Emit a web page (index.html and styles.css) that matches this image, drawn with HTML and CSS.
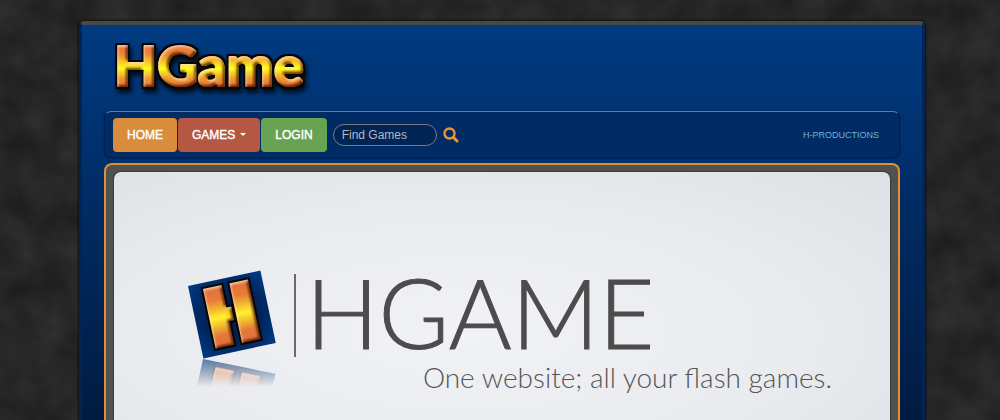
FILE: index.html
```html
<!DOCTYPE html>
<html lang="en">
<head>
<meta charset="utf-8">
<title>HGame</title>
<link rel="stylesheet" href="styles.css">
</head>
<body>
<svg class="texture" aria-hidden="true">
  <filter id="smoke" x="0" y="0" width="100%" height="100%" color-interpolation-filters="sRGB">
    <feTurbulence type="fractalNoise" baseFrequency="0.03" numOctaves="3" seed="4"/>
    <feColorMatrix values="0.1 0 0 0 0.1  0.1 0 0 0 0.1  0.1 0 0 0 0.1  0 0 0 0 1"/>
  </filter>
  <rect width="100%" height="100%" filter="url(#smoke)"/>
</svg>
<div class="page">
  <header class="masthead">
    <a class="brand" href="#" aria-label="HGame">
      <svg class="wordmark" width="208" height="64" viewBox="0 0 208 64">
        <defs>
          <linearGradient id="flame" gradientUnits="userSpaceOnUse" x1="0" y1="7" x2="0" y2="51">
            <stop offset="0" stop-color="#e96f3a"/>
            <stop offset=".25" stop-color="#ee8535"/>
            <stop offset=".58" stop-color="#ffff1c"/>
            <stop offset=".8" stop-color="#f19a31"/>
            <stop offset="1" stop-color="#e5713a"/>
          </linearGradient>
          <filter id="bevel" x="-10%" y="-20%" width="120%" height="150%" color-interpolation-filters="sRGB">
            <feGaussianBlur in="SourceAlpha" stdDeviation="1" result="soft"/>
            <feOffset in="soft" dx="-2" dy="-2" result="up"/>
            <feComposite in="SourceAlpha" in2="up" operator="out" result="low"/>
            <feFlood flood-color="#4a1200" flood-opacity=".8"/>
            <feComposite in2="low" operator="in" result="shade"/>
            <feOffset in="soft" dx="1" dy="2" result="down"/>
            <feComposite in="SourceAlpha" in2="down" operator="out" result="high"/>
            <feFlood flood-color="#ffe8cc" flood-opacity=".7"/>
            <feComposite in2="high" operator="in" result="shine"/>
            <feMorphology in="SourceAlpha" operator="dilate" radius="1.6" result="wide"/>
            <feFlood flood-color="#0b0502"/>
            <feComposite in2="wide" operator="in" result="edge"/>
            <feMerge><feMergeNode in="edge"/><feMergeNode in="SourceGraphic"/><feMergeNode in="shade"/><feMergeNode in="shine"/></feMerge>
          </filter>
        </defs>
        <g class="wordmark-shadow"><text x="4" y="50" filter="url(#bevel)">HGame</text></g>
      </svg>
    </a>
  </header>
  <nav class="navbar">
    <a class="button home" href="#">HOME</a>
    <button class="button games" type="button">GAMES <span class="caret"></span></button>
    <a class="button login" href="#">LOGIN</a>
    <form class="search" role="search">
      <input class="search-box" type="text" placeholder="Find Games" aria-label="Find Games">
      <button class="search-go" type="submit" aria-label="Search">
        <svg width="16" height="16" viewBox="0 0 16 16" fill="none" stroke="#ee9237">
          <circle cx="6.5" cy="6.5" r="5" stroke-width="2.4"/>
          <path d="M10.3 10.3 14 14" stroke-width="3" stroke-linecap="round"/>
        </svg>
      </button>
    </form>
    <a class="credit" href="#">H-PRODUCTIONS</a>
  </nav>
  <main class="frame">
    <section class="hero">
      <svg class="emblem" width="92" height="122" viewBox="0 0 92 122" aria-hidden="true">
        <defs>
          <linearGradient id="bar" x1="0" y1="0" x2="0" y2="1">
            <stop offset="0" stop-color="#e2713a"/>
            <stop offset=".22" stop-color="#e67b38"/>
            <stop offset=".52" stop-color="#fff22c"/>
            <stop offset=".8" stop-color="#e57a38"/>
            <stop offset="1" stop-color="#e06f3b"/>
          </linearGradient>
          <linearGradient id="nub" x1="0" y1="0" x2="0" y2="1">
            <stop offset="0" stop-color="#f5bd30"/>
            <stop offset="1" stop-color="#fff42c"/>
          </linearGradient>
          <radialGradient id="tile" cx=".5" cy=".5" r=".7">
            <stop offset="0" stop-color="#001a45"/>
            <stop offset=".6" stop-color="#00265e"/>
            <stop offset="1" stop-color="#003b86"/>
          </radialGradient>
          <linearGradient id="fade" gradientUnits="userSpaceOnUse" x1="0" y1="88" x2="0" y2="119">
            <stop offset="0" stop-color="#fff" stop-opacity=".7"/>
            <stop offset="1" stop-color="#fff" stop-opacity="0"/>
          </linearGradient>
          <mask id="fade-mask" maskUnits="userSpaceOnUse" x="0" y="86" width="92" height="36">
            <rect y="86" width="92" height="36" fill="url(#fade)"/>
          </mask>
          <g id="badge">
            <rect width="74" height="74" fill="url(#tile)"/>
            <g filter="url(#bevel)">
              <rect x="14" y="6" width="19" height="61" fill="url(#bar)"/>
              <rect x="32" y="29" width="6" height="14" rx="1" fill="url(#nub)"/>
            </g>
            <rect x="41" y="6" width="19" height="61" fill="url(#bar)" filter="url(#bevel)"/>
          </g>
        </defs>
        <use href="#badge" transform="translate(3 18) rotate(-12)"/>
        <g mask="url(#fade-mask)">
          <use href="#badge" transform="matrix(.98 .2 -.2 .9 18 91)"/>
        </g>
      </svg>
      <div class="slogan">
        <h1 class="title">HGAME</h1>
        <p class="tagline">One website; all your flash games.</p>
      </div>
    </section>
  </main>
</div>
</body>
</html>
```

FILE: styles.css
```css
* { box-sizing: border-box; }
html { height: 100%; }
body {
  height: 100%;
  margin: 0;
  padding: 21px 75px 0 79px;
  overflow: hidden;
  background: #252525;
  font-family: "Liberation Sans", Arial, sans-serif;
}
.texture {
  position: absolute;
  inset: 0;
  width: 100%;
  height: 100%;
}
.page {
  position: relative;
  display: flex;
  flex-direction: column;
  height: 100%;
  padding: 0 22px;
  border: solid;
  border-width: 4px 3px 0;
  border-color: #484848 #002453 #002453;
  border-radius: 5px 5px 0 0;
  background: linear-gradient(#003b81, #002f6b 35%, #001b41);
  box-shadow: 0 0 2px 1px #111;
}
.masthead { padding: 11px 6px; }
.brand { display: block; width: 208px; }
.wordmark { display: block; overflow: visible; }
.wordmark text {
  fill: url(#flame);
  stroke: url(#flame);
  stroke-width: 2px;
  stroke-linejoin: round;
  font-family: Lato, sans-serif;
  font-size: 56px;
  font-weight: 900;
}
.wordmark-shadow { filter: drop-shadow(2px 4px 2px #000b); }
.navbar {
  display: flex;
  align-items: center;
  gap: 1px;
  height: 47px;
  padding: 0 20px 0 8px;
  border: 1px solid #00214f;
  border-top: 1px solid #607aab;
  border-radius: 7px;
  background: #002b64;
  box-shadow: 0 0 2px #001c44;
}
.button {
  display: flex;
  align-items: center;
  gap: 5px;
  height: 34px;
  padding: 0 14px;
  border: 0;
  border-radius: 4px;
  color: #fff;
  font: 12px "Liberation Sans", Arial, sans-serif;
  -webkit-text-stroke: 0.4px #fff;
  text-decoration: none;
}
.home { background: #d98c3c; }
.games { background: #b45743; }
.login { background: #68a253; }
.caret {
  border: 3px solid transparent;
  border-top-color: #fff;
  border-bottom: 0;
}
.search {
  display: flex;
  align-items: center;
  gap: 6px;
  margin-left: 5px;
}
.search-box {
  width: 104px;
  height: 22px;
  padding: 0 8px;
  border: 1px solid #7a7b80;
  border-radius: 11px;
  background: #002453;
  color: #bbb;
  font: 12px "Liberation Sans", Arial, sans-serif;
}
.search-box::placeholder { color: #b5b8bf; }
.search-go {
  display: flex;
  padding: 0;
  border: 0;
  background: none;
}
.credit {
  margin-left: auto;
  color: #6bb4d8;
  font-size: 9px;
  text-decoration: none;
}
.frame {
  flex: 1;
  display: flex;
  margin-top: 5px;
  padding: 7px 8px 0;
  border: 2px solid #e48d36;
  border-bottom: 0;
  border-radius: 8px 8px 0 0;
  background: #50524f;
}
.hero {
  flex: 1;
  display: flex;
  gap: 17px;
  padding: 96px 58px 0 71px;
  border-radius: 7px 7px 0 0;
  background: radial-gradient(ellipse at 45% 65%, #f1f2f5, #e9ebef 55%, #dde0e4);
  box-shadow: 0 0 1px 1px #3a3c3c;
}
.emblem { flex: none; }
.slogan {
  flex: 1;
  align-self: flex-start;
  position: relative;
  padding-left: 12px;
}
.slogan::before {
  content: "";
  position: absolute;
  top: 6px;
  left: 0;
  width: 2px;
  height: 83px;
  background: #696969;
}
.title {
  margin: 0;
  color: #4c4c4c;
  font: 300 96px/88px Lato, sans-serif;
  -webkit-text-stroke: 1px #4c4c4c;
}
.tagline {
  margin: 0;
  color: #555;
  font: 300 28px/42px Lato, sans-serif;
  text-align: right;
  white-space: nowrap;
}
```
